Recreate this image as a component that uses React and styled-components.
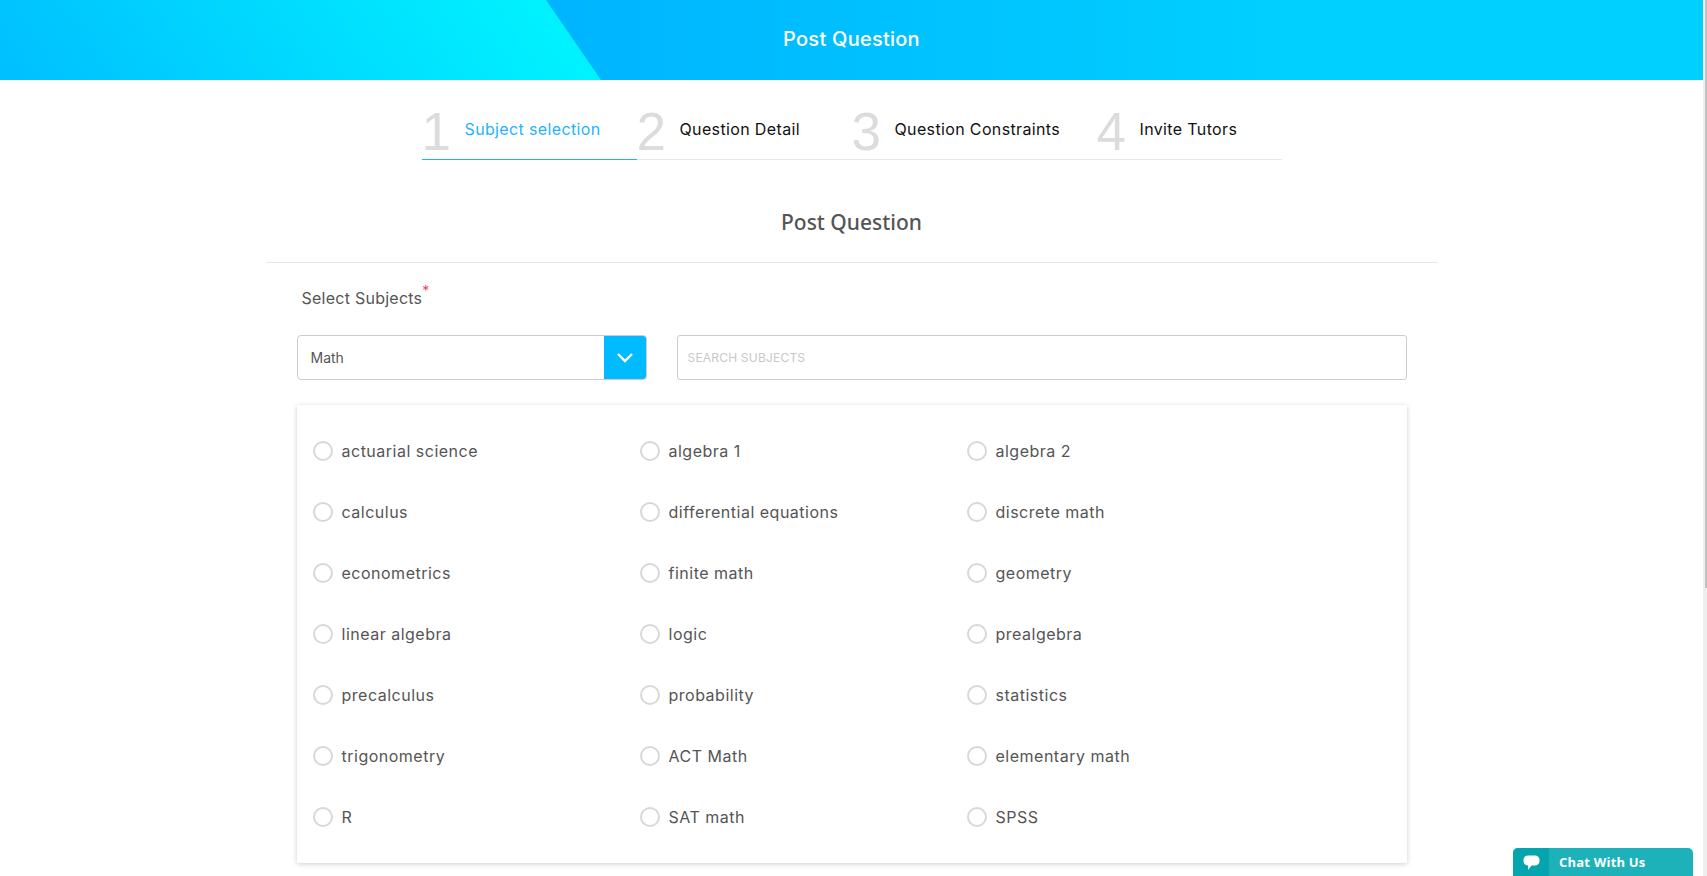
import React from "react";
import styled, { createGlobalStyle } from "styled-components";

const Global = createGlobalStyle`
  html, body { margin: 0; padding: 0; height: 100%; overflow: hidden; background: #fff; }
  body { font-family: "Inter", "Liberation Sans", sans-serif; }
  * { box-sizing: border-box; }
`;
const Page = styled.div`display: flex; height: 876px; width: 1707px; overflow: hidden; position: relative;`;
const Main = styled.div`width: 1703px; flex: none; display: flex; flex-direction: column; align-items: center;`;
const Track = styled.div`width: 4px; flex: none; background: #eeeeee; display: flex; flex-direction: column; align-items: flex-end;`;
const Thumb = styled.div`width: 2px; height: 588px; background: #c1c1c1;`;
const Banner = styled.header`
  width: 100%; height: 80px; display: flex; align-items: center; justify-content: center; flex: none;
  color: #fff; font-size: 20px; font-weight: 500; letter-spacing: .25px; padding-bottom: 3px;
  background:
    linear-gradient(55.5deg, #00bfff 0, #00f2ff 495px, transparent 495.6px) 0 0 / 601px 100% no-repeat,
    linear-gradient(90deg, #00b4ff 545px, #00d0ff 1300px);
`;
const Steps = styled.nav`width: 860px; display: flex; margin-top: 24px; flex: none;`;
const Step = styled.div`
  width: ${p => p.$w}px; height: 56px; flex: none; display: flex; align-items: center; gap: 8px;
  border-bottom: 1px solid ${p => (p.$active ? "#1fb6f5" : "#e8e8e8")};
`;
const StepNum = styled.span`
  font-family: "Liberation Sans", sans-serif; font-size: 53px; line-height: 1; color: #dcdcdc; width: 35px; flex: none;
`;
const StepText = styled.span`
  font-size: 16px; letter-spacing: .36px; margin-bottom: 6px; color: ${p => (p.$active ? "#1fb3ff" : "#111")};
`;
const Title = styled.h1`
  width: 1170px; margin: 0; padding-top: 48px; height: 103px; flex: none; text-align: center;
  font-family: "Noto Sans", sans-serif; font-size: 21px; font-weight: 500; color: #555; border-bottom: 1px solid #e6e6e6;
`;
const Form = styled.section`width: 1110px; flex: none;`;
const Label = styled.div`
  font-size: 16px; letter-spacing: .25px; color: #555; margin: 24px 0 0 5px; height: 46px; line-height: 22px;
  & sup { color: #f0455f; font-size: 14px; line-height: 0; vertical-align: 8px; letter-spacing: 0; }
`;
const Controls = styled.div`display: flex; gap: 30px; height: 45px; margin-top: 2px;`;
const Select = styled.div`
  width: 350px; flex: none; border: 1px solid #ccc; border-radius: 4px; display: flex; align-items: center;
  justify-content: space-between; padding-left: 13px; font-size: 14px; color: #555; overflow: hidden;
`;
const Arrow = styled.div`
  width: 43px; height: 45px; margin-right: -1px; background: #00bbff; display: flex; align-items: center; justify-content: center;
`;
const Search = styled.div`
  flex: 1; border: 1px solid #ccc; border-radius: 3px; display: flex; align-items: center; padding: 0 0 1px 10px;
  font-size: 12px; letter-spacing: .2px; color: #c8c8c8;
`;
const Card = styled.div`
  margin-top: 25px; height: 458px; background: #fff; box-shadow: 0 1px 5px rgba(0,0,0,.2);
  padding: 15px 16px; display: grid; grid-template-columns: repeat(3, 327px); grid-auto-rows: 61px;
`;
const Option = styled.label`display: flex; align-items: center; gap: 9px; font-size: 16px; letter-spacing: .5px; color: #555;`;
const Radio = styled.span`width: 20px; height: 20px; border: 2px solid #d8d8d8; border-radius: 50%; flex: none;`;
const Chat = styled.div`
  position: absolute; right: 14px; bottom: 0; width: 180px; height: 28px; background: #1db2b9;
  border-radius: 5px 5px 0 0; display: flex; overflow: hidden; color: #fff; font: 700 13px "Open Sans", sans-serif; letter-spacing: .2px;
`;
const ChatIcon = styled.div`width: 36px; background: #04a5ae; display: flex; align-items: center; justify-content: center; padding-top: 2px;`;
const ChatText = styled.div`padding-left: 10px; display: flex; align-items: center;`;

const subjects = ["actuarial science","algebra 1","algebra 2","calculus","differential equations","discrete math","econometrics","finite math","geometry","linear algebra","logic","prealgebra","precalculus","probability","statistics","trigonometry","ACT Math","elementary math","R","SAT math","SPSS"];
const steps = [["Subject selection", 215], ["Question Detail", 215], ["Question Constraints", 245], ["Invite Tutors", 185]];

export default function App() {
  return (
    <Page>
      <Global />
      <Main>
        <Banner>Post Question</Banner>
        <Steps>
          {steps.map(([s, w], i) => (
            <Step key={s} $w={w} $active={i === 0}>
              <StepNum>{i + 1}</StepNum>
              <StepText $active={i === 0}>{s}</StepText>
            </Step>
          ))}
        </Steps>
        <Title>Post Question</Title>
        <Form>
          <Label>Select Subjects<sup>*</sup></Label>
          <Controls>
            <Select>Math
              <Arrow>
                <svg width="18" height="12" viewBox="0 0 18 12" fill="none" stroke="#fff" strokeWidth="2.4"><path d="M2 2l7 7 7-7" /></svg>
              </Arrow>
            </Select>
            <Search>SEARCH SUBJECTS</Search>
          </Controls>
          <Card>
            {subjects.map(s => (
              <Option key={s}><Radio />{s}</Option>
            ))}
          </Card>
        </Form>
      </Main>
      <Track><Thumb /></Track>
      <Chat>
        <ChatIcon>
          <svg width="17" height="16" viewBox="0 0 17 16" fill="#fff"><path d="M5 .5h7c2.600 0 4.500 1.800 4.500 4.200v1.600c0 2.400-1.900 4.200-4.500 4.200H8.600L5 15v-4.500C2.400 10.500.5 8.700.5 6.300V4.700C.5 2.300 2.400.5 5 .5z" /></svg>
        </ChatIcon>
        <ChatText>Chat With Us</ChatText>
      </Chat>
    </Page>
  );
}
